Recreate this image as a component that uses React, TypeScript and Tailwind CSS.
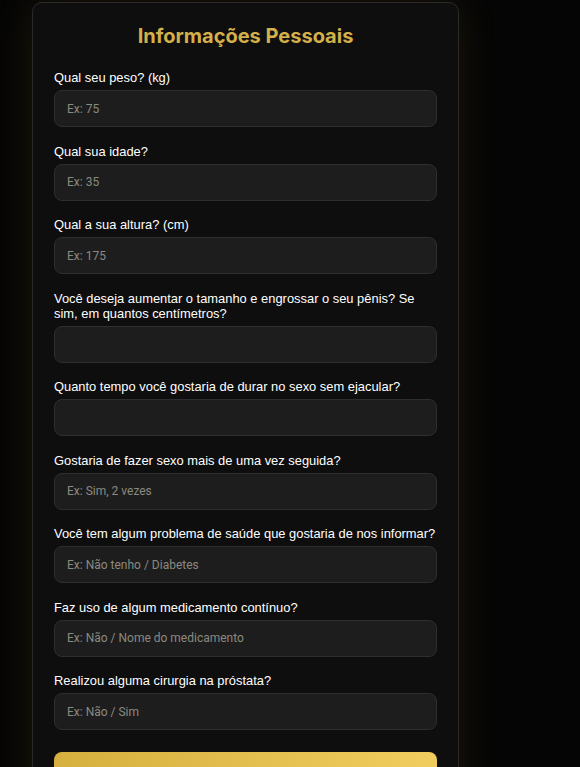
const fields = [
  { label: 'Qual seu peso? (kg)', placeholder: 'Ex: 75' },
  { label: 'Qual sua idade?', placeholder: 'Ex: 35' },
  { label: 'Qual a sua altura? (cm)', placeholder: 'Ex: 175' },
  { label: 'Você deseja aumentar o tamanho e engrossar o seu pênis? Se sim, em quantos centímetros?', placeholder: '' },
  { label: 'Quanto tempo você gostaria de durar no sexo sem ejacular?', placeholder: '' },
  { label: 'Gostaria de fazer sexo mais de uma vez seguida?', placeholder: 'Ex: Sim, 2 vezes' },
  { label: 'Você tem algum problema de saúde que gostaria de nos informar?', placeholder: 'Ex: Não tenho / Diabetes' },
  { label: 'Faz uso de algum medicamento contínuo?', placeholder: 'Ex: Não / Nome do medicamento' },
  { label: 'Realizou alguma cirurgia na próstata?', placeholder: 'Ex: Não / Sim' },
]

export default function App() {
  return (
    <div className="min-h-screen bg-[#050505] pl-[32px] pt-[2px]">
      <div className="w-[427px] rounded-[10px] border border-[#2c2a26] bg-[#0e0e0e] px-[21px] pt-[19px] pb-6 shadow-[0_0_40px_rgba(212,175,55,0.12)]">
        <h2 className="mb-[20px] text-center font-['Inter',sans-serif] text-[20px] leading-[28px] font-bold text-[#d4b04a]">
          Informações Pessoais
        </h2>

        {fields.map((f) => (
          <div key={f.label} className="mb-[16.5px]">
            <label className="mb-[5px] block font-['Liberation_Sans',Arial,sans-serif] text-[12.9px] leading-[15px] text-white">
              {f.label}
            </label>
            <input
              type="text"
              placeholder={f.placeholder}
              className="block h-[37px] w-full rounded-[8px] border border-[#2e2e2e] bg-[#1d1d1d] px-[12px] font-['Roboto',sans-serif] text-[12px] text-white outline-none placeholder:text-[#8a8a80]"
            />
          </div>
        ))}

        <button className="mt-[5.5px] h-[66px] w-full rounded-[8px] bg-gradient-to-r from-[#d6b03e] to-[#f0cd5e] font-['Inter',sans-serif] text-[15px] font-bold text-black">
          Continuar
        </button>
      </div>
    </div>
  )
}
